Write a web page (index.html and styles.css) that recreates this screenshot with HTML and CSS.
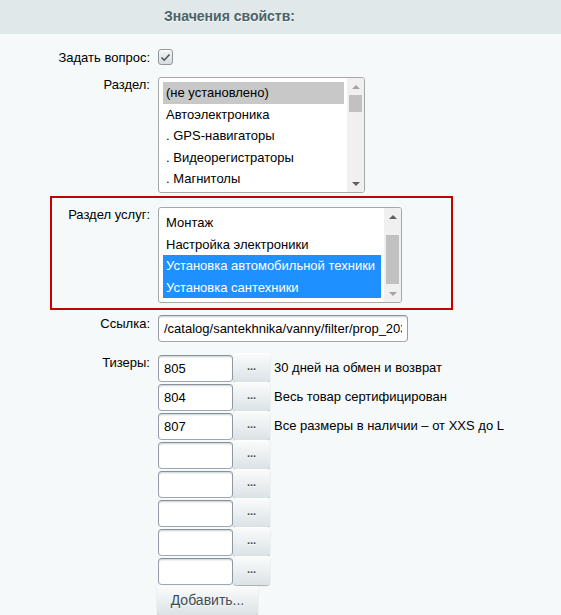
FILE: index.html
```html
<!DOCTYPE html>
<html lang="ru">
<head>
    <meta charset="UTF-8">
    <title>Значения свойств</title>
    <link rel="stylesheet" href="styles.css">
</head>
<body>
    <div class="section-title">Значения свойств:</div>

    <div class="props">
        <div class="row row-check">
            <div class="label">Задать вопрос:</div>
            <div class="field">
                <span class="checkbox">
                    <svg width="11" height="9" viewBox="0 0 11 9"><path d="M1.5 4.5 L4.2 7.2 L9.5 1.5" fill="none" stroke="#4d5559" stroke-width="1.6"/></svg>
                </span>
            </div>
        </div>

        <div class="row row-section">
            <div class="label">Раздел:</div>
            <div class="field">
                <div class="listbox listbox-section">
                    <div class="options">
                        <div class="option option-current">(не установлено)</div>
                        <div class="option">Автоэлектроника</div>
                        <div class="option">. GPS-навигаторы</div>
                        <div class="option">. Видеорегистраторы</div>
                        <div class="option">. Магнитолы</div>
                    </div>
                    <div class="scrollbar">
                        <span class="arrow arrow-up arrow-off"></span>
                        <div class="track track-top"><span class="thumb thumb-small"></span></div>
                        <span class="arrow arrow-down"></span>
                    </div>
                </div>
            </div>
        </div>

        <div class="marked">
            <div class="row">
                <div class="label">Раздел услуг:</div>
                <div class="field">
                    <div class="listbox listbox-services">
                        <div class="options">
                            <div class="option">Монтаж</div>
                            <div class="option">Настройка электроники</div>
                            <div class="option option-selected">Установка автомобильной техники</div>
                            <div class="option option-selected">Установка сантехники</div>
                        </div>
                        <div class="scrollbar">
                            <span class="arrow arrow-up"></span>
                            <div class="track track-bottom"><span class="thumb thumb-large"></span></div>
                            <span class="arrow arrow-down arrow-off"></span>
                        </div>
                    </div>
                </div>
            </div>
        </div>

        <div class="row row-link">
            <div class="label">Ссылка:</div>
            <div class="field">
                <input class="input input-link" type="text" value="/catalog/santekhnika/vanny/filter/prop_2033-is-c9e8">
            </div>
        </div>

        <div class="row row-teasers">
            <div class="label">Тизеры:</div>
            <div class="field">
                <div class="teaser">
                    <input class="input input-id" type="text" value="805">
                    <button class="btn btn-pick">...</button>
                    <span class="teaser-name">30 дней на обмен и возврат</span>
                </div>
                <div class="teaser">
                    <input class="input input-id" type="text" value="804">
                    <button class="btn btn-pick">...</button>
                    <span class="teaser-name">Весь товар сертифицирован</span>
                </div>
                <div class="teaser">
                    <input class="input input-id" type="text" value="807">
                    <button class="btn btn-pick">...</button>
                    <span class="teaser-name">Все размеры в наличии – от XXS до L</span>
                </div>
                <div class="teaser">
                    <input class="input input-id" type="text" value="">
                    <button class="btn btn-pick">...</button>
                </div>
                <div class="teaser">
                    <input class="input input-id" type="text" value="">
                    <button class="btn btn-pick">...</button>
                </div>
                <div class="teaser">
                    <input class="input input-id" type="text" value="">
                    <button class="btn btn-pick">...</button>
                </div>
                <div class="teaser">
                    <input class="input input-id" type="text" value="">
                    <button class="btn btn-pick">...</button>
                </div>
                <div class="teaser">
                    <input class="input input-id" type="text" value="">
                    <button class="btn btn-pick">...</button>
                </div>
                <button class="btn btn-add">Добавить...</button>
            </div>
        </div>
    </div>
</body>
</html>
```

FILE: styles.css
```css
body {
    margin: 0;
    background-color: #f5f9f9;
    font-family: "Liberation Sans", Arial, sans-serif;
    font-size: 13px;
    color: #000;
    overflow: hidden;
}

.section-title {
    height: 34px;
    box-sizing: border-box;
    padding: 8px 0 0 164px;
    background-color: #e0e8ea;
    color: #4b6267;
    font-size: 14px;
    font-weight: bold;
    line-height: 16px;
    text-shadow: 0 1px rgba(255, 255, 255, 0.7);
}

.props {
    padding-top: 15px;
}

.row {
    display: flex;
    align-items: flex-start;
}

.label {
    width: 150px;
    flex-shrink: 0;
    margin-right: 8px;
    text-align: right;
    line-height: 15px;
}

/* rows */
.row-check {
    align-items: center;
    margin-bottom: 12px;
}

.row-section {
    margin-bottom: 3px;
}

.row-link {
    margin-top: 5px;
    margin-bottom: 11px;
}

.row-link .label {
    padding-top: 1px;
}

.row-teasers .label {
    padding-top: 2px;
}

/* highlighted property */
.marked {
    width: 403px;
    margin-left: 50px;
    padding: 9px 0 5px;
    border: 2px solid #c40000;
    box-sizing: border-box;
}

.marked .label {
    width: 98px;
}

/* checkbox */
.checkbox {
    display: flex;
    align-items: center;
    justify-content: center;
    width: 15px;
    height: 16px;
    box-sizing: border-box;
    border: 1px solid #8d979c;
    border-radius: 3px;
    background: linear-gradient(#f3f5f6, #d6dcdf);
    box-shadow: inset 0 1px #fff;
}

/* list boxes */
.listbox {
    display: flex;
    box-sizing: border-box;
    border: 1px solid #a5a8ab;
    border-radius: 3px;
    background-color: #fff;
    overflow: hidden;
}

.listbox-section {
    width: 207px;
    height: 116px;
}

.listbox-services {
    width: 244px;
    height: 96px;
}

.options {
    flex: 1;
    padding: 4px 3px 0 4px;
    overflow: hidden;
}

.option {
    height: 21.5px;
    line-height: 21.5px;
    padding-left: 3px;
    white-space: nowrap;
}

.option-current {
    background-color: #c8c8c8;
}

.option-selected {
    background-color: #1e90ff;
    color: #fff;
}

.scrollbar {
    display: flex;
    flex-direction: column;
    width: 17px;
    background-color: #f0f0f0;
}

.arrow {
    height: 17px;
    display: flex;
    align-items: center;
    justify-content: center;
}

.arrow::before {
    content: "";
    border-left: 4px solid transparent;
    border-right: 4px solid transparent;
}

.arrow-up::before {
    border-bottom: 4px solid #606060;
}

.arrow-down::before {
    border-top: 4px solid #606060;
}

.arrow-off.arrow-up::before {
    border-bottom-color: #a3a3a3;
}

.arrow-off.arrow-down::before {
    border-top-color: #a3a3a3;
}

.track {
    flex: 1;
    display: flex;
    flex-direction: column;
    padding: 0 2px;
}

.track-bottom {
    justify-content: flex-end;
}

.thumb {
    display: block;
    background-color: #c1c1c1;
}

.thumb-small {
    height: 17px;
}

.thumb-large {
    height: 49px;
    margin-bottom: 1px;
}

/* text inputs */
.input {
    height: 27px;
    box-sizing: border-box;
    margin: 0;
    padding: 0 5px;
    border: 1px solid;
    border-color: #87919c #959ea9 #9ea7b1 #959ea9;
    border-radius: 4px;
    background-color: #fff;
    box-shadow: 0 1px 0 0 rgba(255, 255, 255, 0.3), inset 0 2px 2px -1px rgba(180, 188, 191, 0.7);
    font-family: "Liberation Sans", Arial, sans-serif;
    font-size: 13px;
    color: #000;
    outline: none;
}

.input-link {
    width: 250px;
}

.input-id {
    width: 75px;
}

/* teasers */
.teaser {
    display: flex;
    align-items: center;
    height: 29px;
}

.teaser .input {
    margin-top: 2px;
}

.teaser-name {
    margin-left: 4px;
    white-space: nowrap;
}

/* buttons */
.btn {
    box-sizing: border-box;
    height: 29px;
    margin: 0;
    border: none;
    border-radius: 4px;
    background: linear-gradient(#fbfcfc, #dbe3e6);
    box-shadow: 0 0 1px rgba(0, 0, 0, 0.11), 0 1px 1px rgba(0, 0, 0, 0.3), inset 0 1px #fff;
    color: #3f4b54;
    font-family: "Liberation Sans", Arial, sans-serif;
    font-size: 13px;
    text-shadow: 0 1px rgba(255, 255, 255, 0.7);
    cursor: pointer;
}

.btn-pick {
    width: 37px;
    padding: 0 0 4px;
    font-size: 11px;
    font-weight: bold;
}

.btn-add {
    width: 101px;
    margin-top: 1px;
    margin-left: -1px;
    font-size: 14px;
    padding: 0 0 2px;
}
```
